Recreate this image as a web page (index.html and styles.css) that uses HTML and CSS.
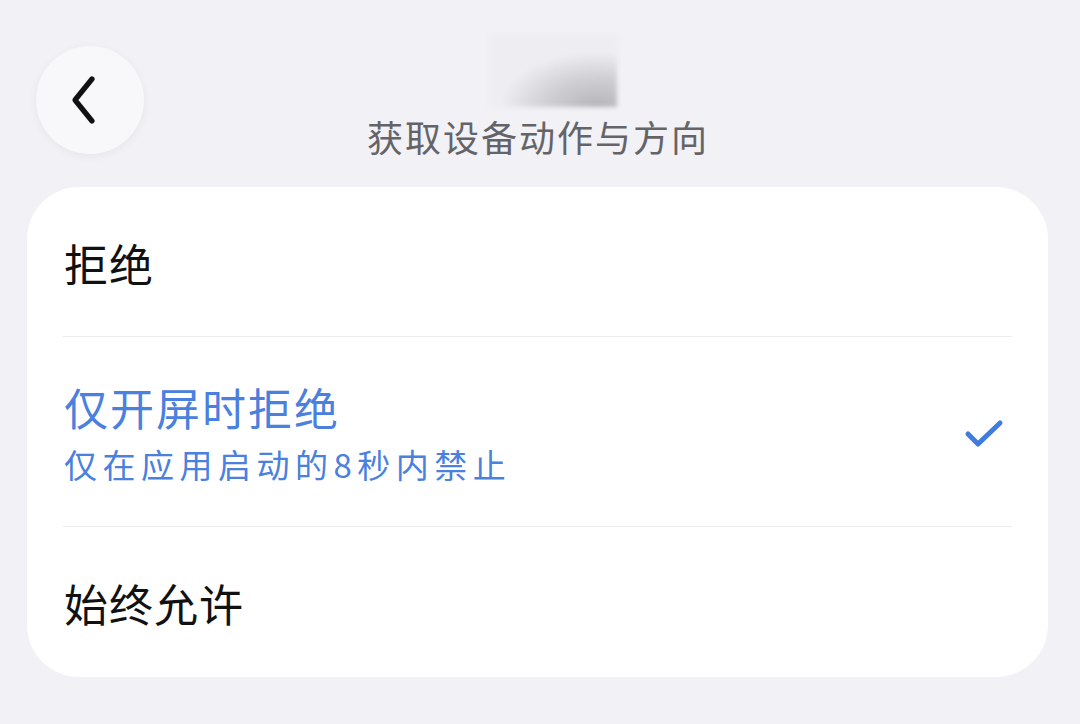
FILE: index.html
```html
<!DOCTYPE html>
<html lang="zh-CN">
<head>
<meta charset="utf-8">
<title>获取设备动作与方向</title>
<link rel="stylesheet" href="styles.css">
</head>
<body>
<header class="header">
  <button class="back" aria-label="返回">
    <svg width="40" height="52" viewBox="0 0 40 52"><path d="M26 5 L9 26 L26 47" fill="none" stroke="#111" stroke-width="5.2" stroke-linecap="round" stroke-linejoin="round"/></svg>
  </button>
  <div class="blur"></div>
  <h1 class="title">获取设备动作与方向</h1>
</header>
<main class="card">
  <div class="row row-short"><span class="label">拒绝</span></div>
  <div class="row row-tall selected">
    <div class="texts">
      <span class="label">仅开屏时拒绝</span>
      <span class="sub">仅在应用启动的8秒内禁止</span>
    </div>
    <svg class="check" width="40" height="32" viewBox="0 0 40 32"><path d="M4 16 L14 26 L36 5" fill="none" stroke="#3f7ce0" stroke-width="5" stroke-linecap="round" stroke-linejoin="round"/></svg>
  </div>
  <div class="row row-short last"><span class="label">始终允许</span></div>
</main>
</body>
</html>
```
FILE: styles.css
```css
* { box-sizing: border-box; }
html, body { margin: 0; padding: 0; }
body {
  width: 1080px;
  height: 724px;
  overflow: hidden;
  background: #f1f1f6;
  font-family: "Noto Sans CJK SC", "Noto Sans", sans-serif;
}
.header {
  display: grid;
  height: 187px;
}
.header > * { grid-area: 1 / 1; }
.back {
  justify-self: start;
  align-self: start;
  margin: 46px 0 0 36px;
  width: 108px;
  height: 108px;
  border-radius: 50%;
  border: none;
  background: #f8f8fb;
  box-shadow: 0 2px 10px rgba(0,0,0,0.05);
  display: flex;
  align-items: center;
  justify-content: center;
  padding: 0 8px 0 0;
}
.blur {
  justify-self: start;
  align-self: start;
  margin: 35px 0 0 490px;
  width: 127px;
  height: 72px;
  background: radial-gradient(ellipse 90% 90% at 85% 100%, #b4b4b9 0%, #cfcfd4 45%, #eeeef2 85%);
  filter: blur(2px);
}
.title {
  justify-self: center;
  align-self: start;
  margin: 114px 0 0 -4px;
  font-size: 36px;
  line-height: 44px;
  font-weight: 400;
  letter-spacing: 2px;
  color: #646468;
}
.card {
  margin: 0 32px 0 27px;
  background: #ffffff;
  border-radius: 52px;
  padding: 0 36px;
}
.row {
  display: flex;
  align-items: center;
  justify-content: space-between;
  border-bottom: 1.5px solid #ececf0;
}
.row.last { border-bottom: none; }
.row-short { height: 150px; }
.row-tall { height: 190px; }
.label {
  font-size: 44px;
  line-height: 64px;
  color: #111;
  letter-spacing: 1px;
  padding-left: 1px;
}
.row-short .label { margin-top: 2px; }
.texts {
  display: flex;
  flex-direction: column;
}
.selected .label {
  color: #4a80de;
  letter-spacing: 2px;
}
.sub {
  font-size: 33px;
  line-height: 48px;
  margin-top: 1px;
  color: #4a80de;
  letter-spacing: 5.5px;
  padding-left: 1px;
}
.check { margin-right: 8px; margin-top: 4px; }
```
